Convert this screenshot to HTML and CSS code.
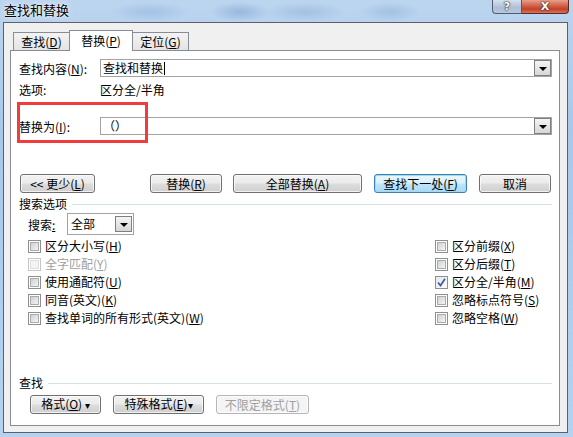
FILE: index.html
```html
<!DOCTYPE html>
<html lang="zh-CN">
<head>
    <meta charset="UTF-8">
    <title>查找和替换</title>
    <link rel="stylesheet" href="styles.css">
</head>
<body>

    <!-- Title bar -->
    <div class="titlebar">
        <span class="title">查找和替换</span>
        <div class="caption-buttons">
            <span class="cap-btn help">?</span>
            <span class="cap-btn close">X</span>
        </div>
    </div>

    <div class="client">
        <!-- Tabs -->
        <div class="tabs">
            <span class="tab tab-find">查找(<u>D</u>)</span>
            <span class="tab tab-active">替换(<u>P</u>)</span>
            <span class="tab tab-goto">定位(<u>G</u>)</span>
        </div>

        <div class="panel">
            <div class="field-row first">
                <span class="field-label">查找内容(<u>N</u>):</span>
                <div class="combo">
                    <span class="combo-text">查找和替换<span class="caret"></span></span>
                    <span class="drop-btn"><span class="arrow"></span></span>
                </div>
            </div>
            <div class="option-row">
                <span class="field-label">选项:</span>
                <span>区分全/半角</span>
            </div>
            <div class="field-row replace">
                <span class="field-label">替换为(<u>I</u>):</span>
                <div class="combo">
                    <span class="combo-text">（）</span>
                    <span class="drop-btn"><span class="arrow"></span></span>
                </div>
            </div>

            <!-- red marker around the replace label -->
            <div class="marker"></div>

            <div class="button-row">
                <button class="btn btn-less">&lt;&lt; 更少(<u>L</u>)</button>
                <button class="btn btn-replace">替换(<u>R</u>)</button>
                <button class="btn btn-all">全部替换(<u>A</u>)</button>
                <button class="btn btn-next default">查找下一处(<u>F</u>)</button>
                <button class="btn btn-cancel">取消</button>
            </div>

            <div class="group-head">
                <span>搜索选项</span>
                <span class="rule"></span>
            </div>

            <div class="search-row">
                <span class="search-label">搜索<u>:</u></span>
                <div class="select">
                    <span class="combo-text">全部</span>
                    <span class="drop-btn"><span class="arrow"></span></span>
                </div>
            </div>

            <div class="options">
                <div class="col col-left">
                    <label class="opt"><span class="check"></span>区分大小写(<u>H</u>)</label>
                    <label class="opt disabled"><span class="check"></span>全字匹配(<u>Y</u>)</label>
                    <label class="opt"><span class="check"></span>使用通配符(<u>U</u>)</label>
                    <label class="opt"><span class="check"></span>同音(英文)(<u>K</u>)</label>
                    <label class="opt"><span class="check"></span>查找单词的所有形式(英文)(<u>W</u>)</label>
                </div>
                <div class="col col-right">
                    <label class="opt"><span class="check"></span>区分前缀(<u>X</u>)</label>
                    <label class="opt"><span class="check"></span>区分后缀(<u>T</u>)</label>
                    <label class="opt"><span class="check checked">
                        <svg viewBox="0 0 9 9" width="9" height="9"><path d="M1 4.5 L3.5 7.5 L8 0.8" fill="none" stroke="#3d5aa8" stroke-width="1.7"/></svg>
                    </span>区分全/半角(<u>M</u>)</label>
                    <label class="opt"><span class="check"></span>忽略标点符号(<u>S</u>)</label>
                    <label class="opt"><span class="check"></span>忽略空格(<u>W</u>)</label>
                </div>
            </div>

            <div class="group-head find-head">
                <span>查找</span>
                <span class="rule"></span>
            </div>

            <div class="format-row">
                <button class="btn btn-format">格式(<u>O</u>) <span class="tri">▾</span></button>
                <button class="btn btn-special">特殊格式(<u>E</u>)<span class="tri">▾</span></button>
                <button class="btn btn-nolimit" disabled>不限定格式(<u>T</u>)</button>
            </div>
        </div>
    </div>

</body>
</html>
```

FILE: styles.css
```css
body {
    margin: 0;
    width: 573px;
    height: 437px;
    overflow: hidden;
    font-family: "Noto Sans CJK SC", "Liberation Sans", sans-serif;
    font-size: 12px;
    color: #000;
    background:
        radial-gradient(ellipse 40px 10px at 150px 12px, rgba(120, 160, 210, 0.35), transparent),
        radial-gradient(ellipse 30px 10px at 240px 12px, rgba(90, 130, 190, 0.35), transparent),
        radial-gradient(ellipse 40px 10px at 305px 12px, rgba(110, 150, 200, 0.3), transparent),
        radial-gradient(ellipse 30px 10px at 390px 12px, rgba(110, 150, 200, 0.3), transparent),
        linear-gradient(180deg, #bcd5ef 0%, #a8c8ea 30%, #b5d2f0 100%);
}
u {
    text-decoration: underline;
    text-underline-offset: 1px;
}

/* Title bar */
.titlebar {
    height: 22px;
    display: flex;
    justify-content: space-between;
}
.title {
    padding-left: 4px;
    font-size: 13px;
    line-height: 20px;
    text-shadow: 0 0 6px rgba(255, 255, 255, 0.9), 0 0 2px rgba(255, 255, 255, 0.9);
}
.caption-buttons {
    display: flex;
    margin-right: 4px;
    height: 14px;
}
.cap-btn {
    display: flex;
    justify-content: center;
    align-items: center;
    height: 13px;
    border: 1px solid #4f5d72;
    border-top: none;
    color: #fff;
    font-family: "DejaVu Sans", sans-serif;
    font-weight: bold;
    font-size: 11px;
    line-height: 13px;
    text-shadow: 0 0 1px #333, 0 0 1px #333, 0 0 2px #333;
}
.help {
    width: 28px;
    border-radius: 0 0 0 4px;
    background: linear-gradient(180deg, #d6e1ee, #aebed4 60%, #b8c8dc);
}
.close {
    width: 46px;
    border-left: none;
    border-color: #5b2a22;
    border-radius: 0 0 4px 0;
    background: linear-gradient(180deg, #e8a08d, #cf5a41 50%, #c1412a 70%, #d8745a);
}

/* Dialog client area */
.client {
    box-sizing: border-box;
    margin-left: 3px;
    width: 565px;
    height: 411px;
    border: 1px solid #5d6068;
    background: #f0f0f0;
    padding: 7px 0 0 6px;
}
.tabs {
    display: flex;
    align-items: flex-end;
    height: 20px;
    padding-left: 3px;
    position: relative;
    z-index: 1;
}
.tab {
    box-sizing: border-box;
    height: 18px;
    line-height: 17px;
    text-align: center;
    border: 1px solid #898c95;
    border-bottom: none;
    background: linear-gradient(180deg, #f3f3f3, #e4e4e4);
}
.tab-find {
    width: 56px;
    border-right: none;
}
.tab-active {
    width: 64px;
    height: 21px;
    margin-bottom: -1px;
    line-height: 19px;
    background: #fff;
}
.tab-goto {
    width: 56px;
    border-left: none;
}

.panel {
    position: relative;
    box-sizing: border-box;
    width: 550px;
    height: 376px;
    border: 1px solid #898c95;
    background: #fff;
    padding: 0 7px 0 8px;
}

/* Find / replace fields */
.field-row {
    display: flex;
    align-items: center;
    height: 18px;
}
.field-row.first {
    margin-top: 8px;
}
.field-row.replace {
    margin-top: 19px;
}
.field-label {
    width: 81px;
}
.combo, .select {
    box-sizing: border-box;
    display: flex;
    align-items: center;
    justify-content: space-between;
    height: 18px;
    border: 1px solid #a3a3a3;
    background: #fff;
}
.combo {
    width: 452px;
}
.combo-text {
    display: flex;
    align-items: center;
    padding-left: 2px;
    line-height: 16px;
}
.caret {
    display: inline-block;
    width: 1px;
    height: 13px;
    margin-left: 1px;
    background: #000;
}
.drop-btn {
    box-sizing: border-box;
    display: flex;
    justify-content: center;
    align-items: center;
    width: 17px;
    height: 16px;
    border: 1px solid #808080;
    background: linear-gradient(180deg, #f4f4f4, #e6e6e6 50%, #d6d6d6);
}
.arrow {
    width: 0;
    height: 0;
    margin-top: 2px;
    border-left: 4px solid transparent;
    border-right: 4px solid transparent;
    border-top: 4px solid #000;
}
.option-row {
    display: flex;
    height: 16px;
    margin-top: 5px;
    line-height: 16px;
}

.marker {
    position: absolute;
    left: 6px;
    top: 51px;
    width: 131px;
    height: 41px;
    box-sizing: border-box;
    border: 3px solid #f23b3b;
}

/* Buttons */
.btn {
    box-sizing: border-box;
    height: 19px;
    padding: 0;
    font-family: inherit;
    font-size: 12px;
    line-height: 16px;
    color: #000;
    border: 1px solid #707070;
    border-radius: 3px;
    background: linear-gradient(180deg, #f2f2f2 0%, #ebebeb 48%, #dddddd 52%, #cfcfcf 100%);
    box-shadow: inset 0 0 0 1px rgba(255, 255, 255, 0.7);
}
.btn.default {
    border-color: #3c7fb1;
    box-shadow: inset 0 0 0 1px #a8d8f0;
    background: linear-gradient(180deg, #eaf6fd 0%, #d9f0fc 48%, #bee6fd 52%, #a7d9f5 100%);
}
.button-row {
    display: flex;
    margin-top: 39px;
    padding-left: 1px;
}
.btn-less { width: 75px; }
.btn-replace { width: 72px; margin-left: 55px; }
.btn-all { width: 129px; margin-left: 11px; }
.btn-next { width: 93px; margin-left: 12px; }
.btn-cancel { width: 72px; margin-left: 12px; }

/* Group headers with the thin rule */
.group-head {
    display: flex;
    align-items: center;
    height: 14px;
    margin-top: 4px;
    line-height: 14px;
}
.rule {
    flex: 1;
    height: 1px;
    margin-left: 5px;
    background: #d5dfe5;
}
.find-head {
    margin-top: 49px;
}

/* Search scope */
.search-row {
    display: flex;
    align-items: center;
    margin-top: 2px;
    padding-left: 9px;
}
.search-label {
    width: 39px;
}
.select {
    width: 67px;
    height: 22px;
    padding-right: 1px;
}
.select .combo-text {
    padding-left: 3px;
}

/* Option checkboxes */
.options {
    display: flex;
    margin-top: 2px;
}
.col {
    display: flex;
    flex-direction: column;
}
.col-left {
    width: 407px;
    padding-left: 9px;
}
.opt {
    display: flex;
    align-items: center;
    height: 18px;
    line-height: 18px;
}
.opt.disabled {
    color: #a0a0a0;
}
.check {
    box-sizing: border-box;
    display: flex;
    justify-content: center;
    align-items: center;
    width: 13px;
    height: 13px;
    margin-right: 4px;
    border: 1px solid #8e8f8f;
    background: #fff;
}
.check::after {
    content: "";
    width: 9px;
    height: 9px;
    box-sizing: border-box;
    border: 1px solid #a9abad;
    background: linear-gradient(135deg, #cfd1d4, #f4f4f4);
}
.check.checked::after {
    display: none;
}
.check.checked {
    background: linear-gradient(135deg, #e6e7e9, #fbfbfb);
}
.disabled .check {
    border-color: #c6c6c6;
}
.disabled .check::after {
    border-color: #dedede;
    background: #f4f4f4;
}

/* Format buttons */
.format-row {
    display: flex;
    margin-top: 5px;
    padding-left: 11px;
}
.btn-format { width: 71px; }
.btn-special { width: 91px; margin-left: 12px; }
.btn-nolimit {
    width: 93px;
    margin-left: 12px;
    color: #a0a0a0;
    border-color: #b5b5b5;
    background: #f4f4f4;
}
.tri {
    font-size: 10px;
}
```
